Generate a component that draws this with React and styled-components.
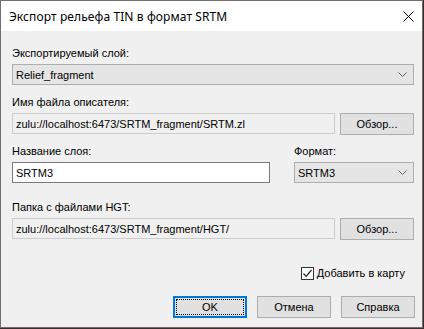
import React from 'react';
import styled, { createGlobalStyle } from 'styled-components';

const GlobalStyle = createGlobalStyle`
  html, body {
    margin: 0;
    padding: 0;
    background: #3b2c2e;
  }
  body {
    font-family: "Liberation Sans", Arial, sans-serif;
    font-size: 11px;
    color: #000;
  }
`;

const Window = styled.div`
  width: 421px;
  height: 326px;
  border: 1px solid #6f6f6f;
  background: #f0f0f0;
  display: flex;
  flex-direction: column;
`;

const TitleBar = styled.div`
  height: 30px;
  background: #ffffff;
  display: flex;
  align-items: center;
  justify-content: space-between;
  padding: 0 0 0 8px;
`;

const Title = styled.span`
  font-family: "Noto Sans", "Liberation Sans", sans-serif;
  font-size: 12px;
  letter-spacing: 0.1px;
  margin-top: 1px;
`;

const CloseBtn = styled.div`
  width: 28px;
  height: 30px;
  display: flex;
  align-items: center;
  justify-content: center;
`;

const Body = styled.div`
  display: flex;
  flex-direction: column;
  padding: 14px 8px 0 11px;
`;

const Label = styled.div`
  height: 16px;
  line-height: 16px;
  margin-top: ${p => p.$top || 0}px;
  margin-bottom: 3px;
`;

const Row = styled.div`
  display: flex;
  align-items: flex-start;
  gap: ${p => p.$gap || 5}px;
`;

const Column = styled.div`
  display: flex;
  flex-direction: column;
  width: ${p => p.$w}px;
`;

const Select = styled.div`
  box-sizing: border-box;
  width: ${p => (p.$w ? `${p.$w}px` : '100%')};
  height: 21px;
  background: #e5e5e5;
  border: 1px solid #adadad;
  display: flex;
  align-items: center;
  justify-content: space-between;
  padding: 0 6px 0 3px;
`;

const TextBox = styled.div`
  box-sizing: border-box;
  width: ${p => p.$w}px;
  height: 21px;
  background: ${p => (p.$readOnly ? '#f0f0f0' : '#ffffff')};
  border: 1px solid ${p => (p.$readOnly ? '#cccccc' : '#7a7a7a')};
  display: flex;
  align-items: center;
  padding: 0 3px;
  white-space: nowrap;
`;

const Button = styled.div`
  box-sizing: border-box;
  width: 74px;
  height: 22px;
  background: #e1e1e1;
  border: ${p => (p.$default ? '2px solid #0078d7' : '1px solid #adadad')};
  display: flex;
  align-items: center;
  justify-content: center;
  position: relative;
`;

const FocusRing = styled.div`
  position: absolute;
  inset: 1px;
  border: 1px dotted #000;
`;

const CheckRow = styled.div`
  display: flex;
  justify-content: flex-end;
  align-items: center;
  gap: 3px;
  margin-top: 25px;
  margin-right: 9px;
  height: 16px;
`;

const CheckBox = styled.div`
  box-sizing: border-box;
  width: 13px;
  height: 13px;
  border: 1px solid #333;
  background: #fff;
  display: flex;
  align-items: center;
  justify-content: center;
`;

const ButtonBar = styled.div`
  display: flex;
  justify-content: flex-end;
  gap: 10px;
  margin-top: 15px;
  margin-right: -1px;
`;

const Chevron = () => (
  <svg width="9" height="5" viewBox="0 0 9 5">
    <path d="M0.5 0.5 L4.5 4.5 L8.5 0.5" fill="none" stroke="#606060" strokeWidth="1" />
  </svg>
);

export default function App() {
  return (
    <>
      <GlobalStyle />
      <Window>
        <TitleBar>
          <Title>Экспорт рельефа TIN в формат SRTM</Title>
          <CloseBtn>
            <svg width="11" height="11" viewBox="0 0 11 11">
              <path d="M0.5 0.5 L10.5 10.5 M10.5 0.5 L0.5 10.5" stroke="#000" strokeWidth="1" />
            </svg>
          </CloseBtn>
        </TitleBar>
        <Body>
          <Label>Экспортируемый слой:</Label>
          <Select $w={402}>
            <span>Relief_fragment</span>
            <Chevron />
          </Select>

          <Label $top={9}>Имя файла описателя:</Label>
          <Row>
            <TextBox $w={323} $readOnly>zulu://localhost:6473/SRTM_fragment/SRTM.zl</TextBox>
            <Button>Обзор...</Button>
          </Row>

          <Row $gap={24}>
            <Column $w={258}>
              <Label $top={8}>Название слоя:</Label>
              <TextBox $w={258}>SRTM3</TextBox>
            </Column>
            <Column $w={120}>
              <Label $top={8}>Формат:</Label>
              <Select $w={120}>
                <span>SRTM3</span>
                <Chevron />
              </Select>
            </Column>
          </Row>

          <Label $top={16}>Папка с файлами HGT:</Label>
          <Row>
            <TextBox $w={323} $readOnly>zulu://localhost:6473/SRTM_fragment/HGT/</TextBox>
            <Button>Обзор...</Button>
          </Row>

          <CheckRow>
            <CheckBox>
              <svg width="11" height="11" viewBox="0 0 11 11">
                <path d="M1.5 5.5 L4.2 8.3 L9.5 2" fill="none" stroke="#222" strokeWidth="1.2" />
              </svg>
            </CheckBox>
            <span>Добавить в карту</span>
          </CheckRow>

          <ButtonBar>
            <Button $default>
              <FocusRing />
              OK
            </Button>
            <Button>Отмена</Button>
            <Button>Справка</Button>
          </ButtonBar>
        </Body>
      </Window>
    </>
  );
}
